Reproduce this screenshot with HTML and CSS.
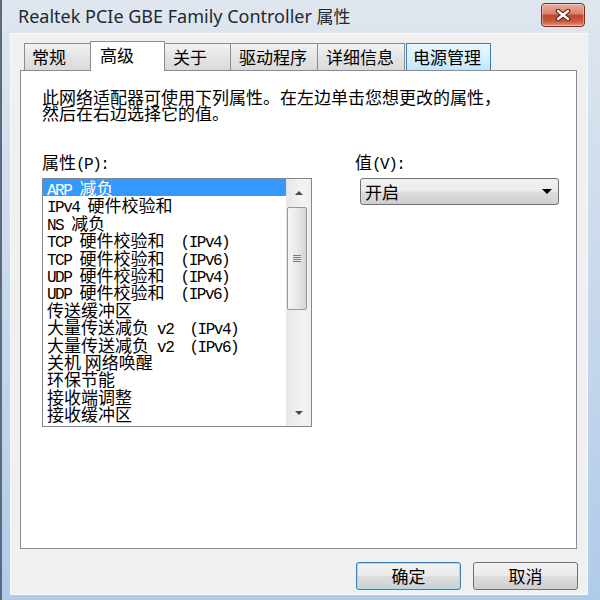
FILE: index.html
```html
<!DOCTYPE html>
<html lang="zh-CN">
<head>
  <meta charset="UTF-8">
  <title>Realtek PCIe GBE Family Controller 属性</title>
  <link rel="stylesheet" href="styles.css">
</head>
<body>
  <div class="window">
    <div class="titlebar">
      <span class="title">Realtek PCIe GBE Family Controller <span class="cjk">属性</span></span>
      <button class="close" title="关闭">
        <svg width="16" height="12" viewBox="0 0 16 12">
          <path d="M3 2 L13 10 M13 2 L3 10" stroke="#5a1c12" stroke-width="4.6" stroke-linecap="round"/>
          <path d="M3 2 L13 10 M13 2 L3 10" stroke="#ffffff" stroke-width="2.4" stroke-linecap="round"/>
        </svg>
      </button>
    </div>

    <div class="dialog">
      <div class="tabs">
        <div class="tab">常规</div>
        <div class="tab active">高级</div>
        <div class="tab">关于</div>
        <div class="tab">驱动程序</div>
        <div class="tab">详细信息</div>
        <div class="tab hover">电源管理</div>
      </div>

      <div class="panel">
        <p class="intro">此网络适配器可使用下列属性。在左边单击您想更改的属性，<br>然后在右边选择它的值。</p>

        <div class="props">
          <div class="prop-list">
            <div class="label">属性<span class="lat">(P):</span></div>
            <div class="listbox">
              <ul class="items">
                <li class="selected"><span class="lat">ARP </span>减负</li>
                <li><span class="lat">IPv4 </span>硬件校验和</li>
                <li><span class="lat">NS </span>减负</li>
                <li><span class="lat">TCP </span>硬件校验和<span class="lat">  (IPv4)</span></li>
                <li><span class="lat">TCP </span>硬件校验和<span class="lat">  (IPv6)</span></li>
                <li><span class="lat">UDP </span>硬件校验和<span class="lat">  (IPv4)</span></li>
                <li><span class="lat">UDP </span>硬件校验和<span class="lat">  (IPv6)</span></li>
                <li>传送缓冲区</li>
                <li>大量传送减负<span class="lat"> v2  (IPv4)</span></li>
                <li>大量传送减负<span class="lat"> v2  (IPv6)</span></li>
                <li>关机 网络唤醒</li>
                <li>环保节能</li>
                <li>接收端调整</li>
                <li>接收缓冲区</li>
              </ul>
              <div class="scrollbar">
                <div class="arrow-btn"><span class="tri up"></span></div>
                <div class="track">
                  <div class="thumb"><span class="grip"></span></div>
                </div>
                <div class="arrow-btn"><span class="tri down"></span></div>
              </div>
            </div>
          </div>

          <div class="prop-value">
            <div class="label">值<span class="lat">(V):</span></div>
            <div class="select">
              <span>开启</span>
              <span class="caret"></span>
            </div>
          </div>
        </div>
      </div>

      <div class="buttons">
        <button class="btn default">确定</button>
        <button class="btn">取消</button>
      </div>
    </div>
  </div>
</body>
</html>
```

FILE: styles.css
```css
body {
  margin: 0;
  font-family: "Noto Sans CJK SC", "Noto Sans", sans-serif;
  color: #000;
}

.window {
  width: 600px;
  height: 600px;
  box-sizing: border-box;
  border-left: 2px solid #5c6b7c;
  padding-bottom: 5px;
  background: linear-gradient(#dfe6ee, #cfdced 35%, #b0cbea);
  display: flex;
  flex-direction: column;
}

/* Title bar */
.titlebar {
  height: 33px;
  flex: 0 0 33px;
  display: flex;
  justify-content: space-between;
  align-items: flex-start;
  padding: 0 15px 0 16px;
}
.title {
  font-family: "Noto Sans", sans-serif;
  font-size: 18px;
  line-height: 22px;
  padding-top: 5px;
  color: #1e2834;
}
.title .cjk {
  font-family: "Noto Sans CJK SC", sans-serif;
  font-size: 17px;
}
.close {
  width: 44px;
  height: 24px;
  margin-top: 3px;
  padding: 0;
  border: 1px solid #7b2b20;
  border-radius: 4px;
  background: linear-gradient(#eab0a2 0%, #d8806b 45%, #c2452c 52%, #cd5a42 80%, #e29a86 100%);
  box-shadow: inset 0 0 0 1px rgba(255, 255, 255, 0.35);
  display: flex;
  align-items: center;
  justify-content: center;
}

/* Dialog body */
.dialog {
  flex: 1;
  margin: 0 12px 0 8px;
  border: 1px solid #f7fafd;
  background-color: #f0f0f0;
  display: flex;
  flex-direction: column;
}

.tabs {
  display: flex;
  align-items: flex-start;
  padding: 7px 0 0 13px;
  margin-bottom: -1px;
  position: relative;
  z-index: 1;
}
.tab {
  min-width: 67px;
  height: 27px;
  box-sizing: border-box;
  margin-top: 2px;
  margin-left: -1px;
  padding: 0 10px 0 8px;
  border: 1px solid #898c95;
  border-bottom: none;
  background: linear-gradient(#f3f3f3, #e4e4e4 50%, #dadada);
  font-size: 17px;
  line-height: 26px;
  color: #000;
}
.tab:first-child {
  margin-left: 0;
  padding-left: 7px;
}
.tab.active {
  height: 30px;
  min-width: 75px;
  margin-top: 0;
  padding-left: 9px;
  background: #fff;
  line-height: 25px;
  position: relative;
  z-index: 2;
}
.tab.hover {
  border-color: #3c7fb1;
  margin-left: 1px;
  padding: 0 9px 0 6px;
  background: linear-gradient(#eaf6fd, #d9f0fc 50%, #bee6fd);
}

.panel {
  flex: 1;
  margin: 0 10px 0 9px;
  padding: 18px 0 0 21px;
  border: 1px solid #898c95;
  background-color: #fff;
}

.intro {
  margin: 0;
  font-size: 17px;
  line-height: 16px;
}

.props {
  display: flex;
  margin-top: 31px;
}
.label {
  height: 20px;
  font-size: 17px;
  line-height: 20px;
  margin-bottom: 6px;
}
.lat {
  font-family: "Liberation Mono", monospace;
  font-size: 16px;
  letter-spacing: -1.5px;
  white-space: pre;
}

/* Property list */
.prop-list {
  width: 270px;
  flex-shrink: 0;
}
.listbox {
  height: 249px;
  box-sizing: border-box;
  border: 1px solid #828790;
  display: flex;
}
.items {
  flex: 1;
  list-style: none;
  margin: 0;
  padding: 0;
  overflow: hidden;
}
.items li {
  height: 17.4px;
  line-height: 17.4px;
  padding-left: 4px;
  font-size: 17px;
  white-space: nowrap;
}
.items li.selected {
  background-color: #3399ff;
  color: #fff;
}

.scrollbar {
  width: 25px;
  display: flex;
  flex-direction: column;
  background: linear-gradient(90deg, #e6e6e9, #f3f3f3 60%, #eeeeee);
}
.arrow-btn {
  height: 27px;
  display: flex;
  align-items: center;
  justify-content: center;
}
.tri {
  width: 0;
  height: 0;
  border-left: 4px solid transparent;
  border-right: 4px solid transparent;
}
.tri.up {
  border-bottom: 4px solid #4a4a4a;
}
.tri.down {
  border-top: 4px solid #4a4a4a;
}
.track {
  flex: 1;
}
.thumb {
  width: 20px;
  height: 103px;
  box-sizing: border-box;
  margin: 1px 0 0 1px;
  border: 1px solid #979797;
  border-radius: 2px;
  background: linear-gradient(90deg, #f5f5f5, #e9e9ea 50%, #d5d5d7);
  display: flex;
  align-items: center;
  justify-content: center;
}
.grip {
  width: 8px;
  height: 7px;
  background: repeating-linear-gradient(#7c7c7c 0 1px, #ececec 1px 2px);
}

/* Value dropdown */
.prop-value {
  margin-left: 43px;
  flex-shrink: 0;
}
.select {
  width: 199px;
  height: 27px;
  box-sizing: border-box;
  margin-left: 5px;
  padding: 0 6px 0 4px;
  border: 1px solid #707070;
  border-radius: 3px;
  background: linear-gradient(#f2f2f2, #ebebeb 48%, #dddddd 52%, #cfcfcf);
  display: flex;
  align-items: center;
  justify-content: space-between;
  font-size: 17px;
}
.caret {
  width: 0;
  height: 0;
  border-left: 5px solid transparent;
  border-right: 5px solid transparent;
  border-top: 5px solid #000;
}

/* Bottom buttons */
.buttons {
  display: flex;
  justify-content: flex-end;
  gap: 12px;
  padding: 13px 9px 4px 0;
}
.btn {
  width: 105px;
  height: 28px;
  border: 1px solid #707070;
  border-radius: 3px;
  background: linear-gradient(#f2f2f2, #ebebeb 48%, #dddddd 52%, #cfcfcf);
  font-family: "Noto Sans CJK SC", sans-serif;
  font-size: 17px;
  line-height: 24px;
  color: #000;
  padding: 0;
}
.btn.default {
  border-color: #3c7fb1;
  box-shadow: inset 0 0 0 1px #a6dcf5;
}
```
